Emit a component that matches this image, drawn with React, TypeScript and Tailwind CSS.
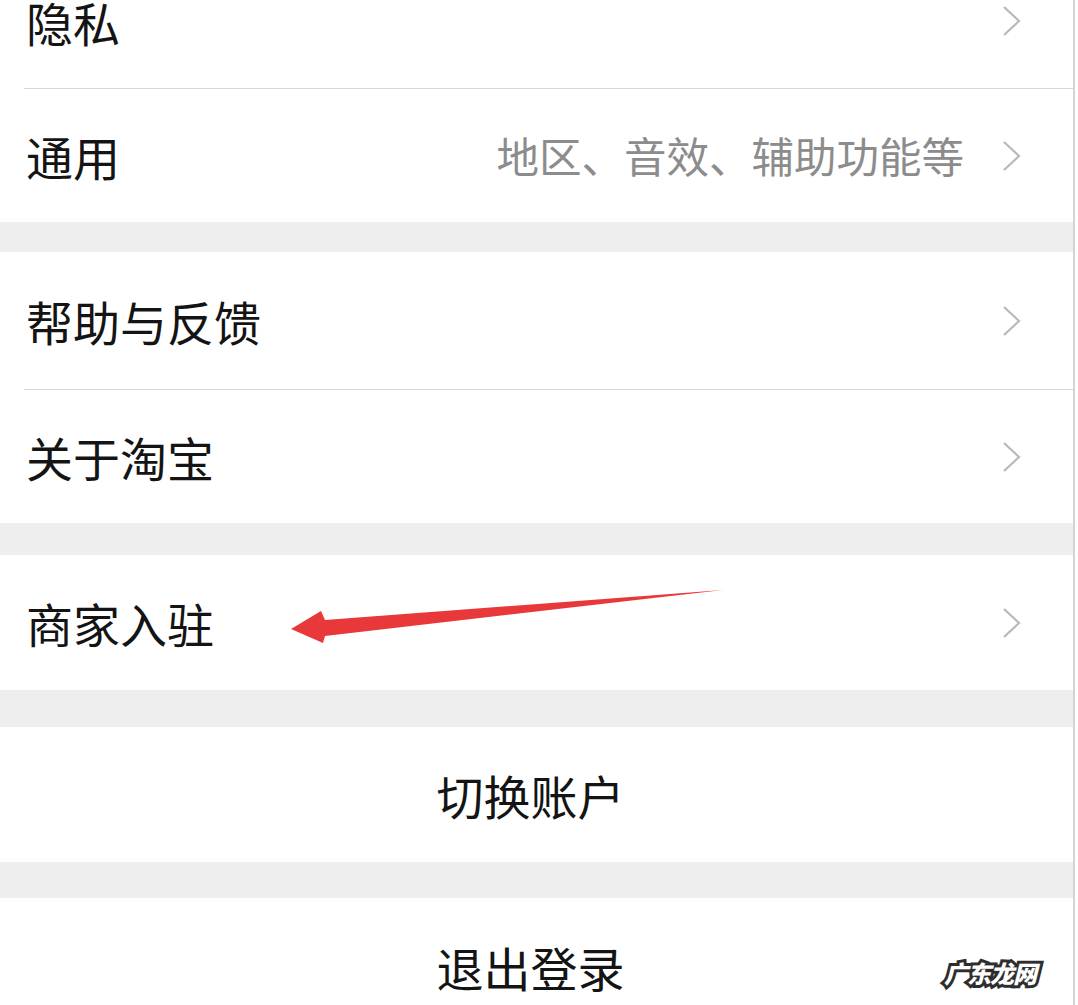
import { ReactNode } from "react";

const font = "font-['Noto_Sans_CJK_SC','Noto_Sans',sans-serif]";

function Chevron() {
  return (
    <svg width="20" height="32" viewBox="0 0 20 32" className="shrink-0">
      <polyline points="2,2 17,16 2,30" fill="none" stroke="#b9b9b9" strokeWidth="2.2" />
    </svg>
  );
}

function Row({ label, hint, h, last }: { label: string; hint?: string; h: string; last?: boolean }) {
  return (
    <div className={`flex items-stretch bg-white pl-[24px] ${h}`}>
      <div className={`flex flex-1 items-center pr-[51px] ${last ? "" : "border-b border-[#d6d6d6]"}`}>
        <span className="flex-1 pl-[2px] text-[47px] leading-none text-[#141414]">{label}</span>
        {hint && <span className="mr-[38px] text-[42.5px] leading-none text-[#8c8c8c]">{hint}</span>}
        <Chevron />
      </div>
    </div>
  );
}

function Gap({ h }: { h: string }) {
  return <div className={`bg-[#eeeeee] ${h}`} />;
}

function Button({ children, h }: { children: ReactNode; h: string }) {
  return (
    <div className={`flex items-center justify-center bg-white text-[47px] leading-none text-[#141414] ${h}`}>
      <span className="-translate-x-[6px]">{children}</span>
    </div>
  );
}

export default function App() {
  return (
    <div className={`relative h-[1005px] w-[1078px] overflow-hidden bg-white ${font}`}>
      <div className="flex h-full">
        <div className="w-[1073px]">
          <div className="-mt-[46px]">
            <Row label="隐私" h="h-[135px]" />
            <Row label="通用" hint="地区、音效、辅助功能等" h="h-[133px]" last />
            <Gap h="h-[30px]" />
            <Row label="帮助与反馈" h="h-[138px]" />
            <Row label="关于淘宝" h="h-[133px]" last />
            <Gap h="h-[32px]" />
            <Row label="商家入驻" h="h-[135px]" last />
            <Gap h="h-[37px]" />
            <Button h="h-[135px]">切换账户</Button>
            <Gap h="h-[36px]" />
            <Button h="h-[136px]">退出登录</Button>
          </div>
        </div>
        <div className="w-[2px] bg-[#d4d4d4]" />
        <div className="flex-1 bg-white" />
      </div>

      {/* annotation arrow */}
      <svg className="pointer-events-none absolute inset-0" width="1078" height="1005" viewBox="0 0 1078 1005">
        <polygon
          points="291,629 321,611 325,620 723,590 325,636 323,643"
          fill="#e8383a"
        />
      </svg>

      {/* watermark */}
      <div className="absolute left-[944px] top-[961px] text-[24px] font-black italic leading-none tracking-[-1px] text-white [-webkit-text-stroke:6px_#2e2e2e] [paint-order:stroke_fill]">
        广东龙网
      </div>
    </div>
  );
}
